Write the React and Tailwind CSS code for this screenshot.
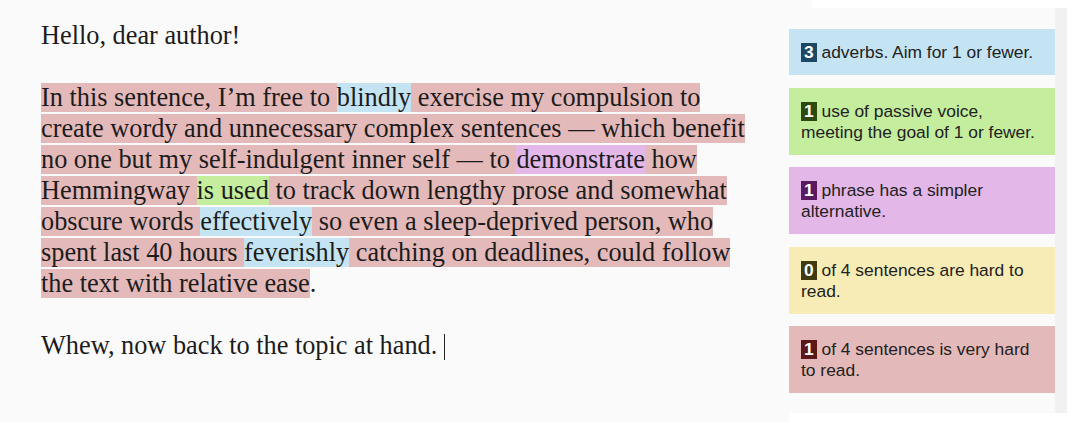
const serif = { fontFamily: '"Liberation Serif", "Times New Roman", serif' };

const stats = [
  { n: "3", text: "adverbs. Aim for 1 or fewer.", bg: "bg-[#c4e3f3]", badge: "bg-[#1c4866]" },
  { n: "1", text: "use of passive voice, meeting the goal of 1 or fewer.", bg: "bg-[#c4ed9d]", badge: "bg-[#2d4a0e]" },
  { n: "1", text: "phrase has a simpler alternative.", bg: "bg-[#e3b7e8]", badge: "bg-[#5a1a60]" },
  { n: "0", text: "of 4 sentences are hard to read.", bg: "bg-[#f7ecb5]", badge: "bg-[#3f3a12]" },
  { n: "1", text: "of 4 sentences is very hard to read.", bg: "bg-[#e4b9b9]", badge: "bg-[#5a1818]" },
];

function Stat({ n, text, bg, badge }) {
  return (
    <div className={`${bg} pl-[12px] pr-[10px] pt-[13px] pb-[12px] text-[17.4px] leading-[21px] text-[#222]`}>
      <span className={`${badge} relative top-[1px] inline-block px-[3px] h-[19px] leading-[19px] font-bold text-white align-top`}>
        {n}
      </span>{" "}
      {text}
    </div>
  );
}

export default function App() {
  return (
    <div
      className="flex w-[1080px] h-[422px] bg-white"
      style={{ fontFamily: '"Liberation Sans", Arial, sans-serif' }}
    >
      {/* Editor */}
      <div className="w-[789px] bg-[#fafafa] pl-[41px] pt-[20px]">
        <div className="w-[716px] text-[26.3px] leading-[31px] text-[#1c1c1c]" style={serif}>
          <p>Hello, dear author!</p>
          <p><br /></p>
          <p>
            <span className="bg-[#e4b9b9]">In this sentence, I’m free to </span>
            <span className="bg-[#c4e3f3]">blindly</span>
            <span className="bg-[#e4b9b9]">
              {" "}exercise my compulsion to create wordy and unnecessary complex sentences — which benefit no one but my self-indulgent inner self — to{" "}
            </span>
            <span className="bg-[#e3b7e8]">demonstrate</span>
            <span className="bg-[#e4b9b9]"> how Hemmingway </span>
            <span className="bg-[#c4ed9d]">is used</span>
            <span className="bg-[#e4b9b9]"> to track down lengthy prose and somewhat obscure words </span>
            <span className="bg-[#c4e3f3]">effectively</span>
            <span className="bg-[#e4b9b9]"> so even a sleep-deprived person, who spent last 40 hours </span>
            <span className="bg-[#c4e3f3]">feverishly</span>
            <span className="bg-[#e4b9b9]"> catching on deadlines, could follow the text with relative ease</span>.
          </p>
          <p><br /></p>
          <p>
            Whew, now back to the topic at hand.{" "}
            <span className="inline-block w-px h-[26px] bg-[#222] align-[-6px]" />
          </p>
        </div>
      </div>

      {/* Sidebar */}
      <div className="w-[266px] flex flex-col">
        <div className="h-[8px] flex">
          <div className="w-[23px] bg-[#fafafa]" />
        </div>
        <div className="flex-1 bg-[#fafafa] pt-[21px] flex flex-col gap-[12.5px]">
          {stats.map((s, i) => (
            <Stat key={i} {...s} />
          ))}
        </div>
        <div className="h-[9px]" />
      </div>

      {/* Scroll strip */}
      <div className="w-[12px] mt-[8px] mb-[9px] bg-[#f1f1f1]" />
    </div>
  );
}
